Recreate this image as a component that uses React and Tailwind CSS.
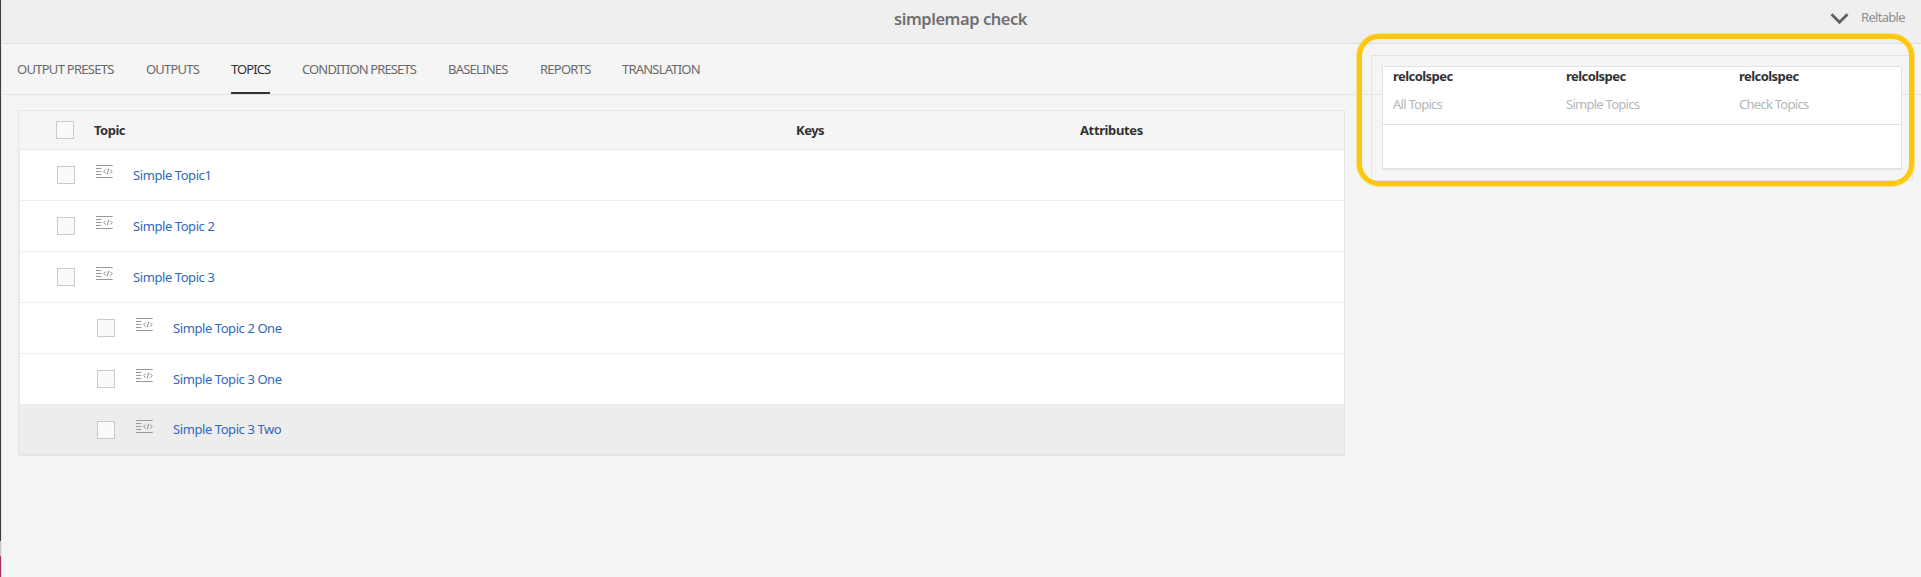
import React from "react";

const tabs = [
  { label: "OUTPUT PRESETS", style: "w-[97px] tracking-[-0.72px]" },
  { label: "OUTPUTS", style: "w-[53px] tracking-[-0.8px]" },
  { label: "TOPICS", style: "w-[39px] tracking-[-0.9px]", active: true },
  { label: "CONDITION PRESETS", style: "w-[114px] tracking-[-0.87px]" },
  { label: "BASELINES", style: "w-[60px] tracking-[-0.78px]" },
  { label: "REPORTS", style: "w-[50px] tracking-[-0.75px]" },
  { label: "TRANSLATION", style: "w-[78px] tracking-[-0.8px]" },
];

const topics = [
  { id: 1, title: "Simple Topic1" },
  { id: 2, title: "Simple Topic 2" },
  { id: 3, title: "Simple Topic 3" },
  { id: 4, title: "Simple Topic 2 One", child: true },
  { id: 5, title: "Simple Topic 3 One", child: true },
  { id: 6, title: "Simple Topic 3 Two", child: true, selected: true },
];

const relColumns = ["All Topics", "Simple Topics", "Check Topics"];

function Checkbox() {
  return (
    <span className="block w-[18px] h-[18px] shrink-0 border border-[#cacaca] bg-[#fafafa]"></span>
  );
}

function TopicIcon() {
  return (
    <svg className="block shrink-0" width="17" height="13" viewBox="0 0 17 13" fill="none">
      <path d="M0 0.5H16.7M0 12.5H16.7" stroke="#999999" strokeWidth="1" />
      <path d="M0 3.5H5.3M0 6.5H5.3M0 9.5H5.3" stroke="#999999" strokeWidth="1.1" />
      <path d="M9.6 4.6L7.7 6.6L9.6 8.6M14.2 4.6L16.1 6.6L14.2 8.6M12.7 3.8L11.2 9.4" stroke="#8c8c8c" strokeWidth="1" />
    </svg>
  );
}

function Header() {
  return (
    <header className="flex h-11 border-b border-[#dedede] bg-[#efefef] text-[#707070]">
      <div className="w-[892px]"></div>
      <h1 className="w-[936px] text-[16.5px] leading-[38px] font-semibold tracking-[-0.45px]">
        simplemap check
      </h1>
      <svg className="mt-3 shrink-0" width="19" height="13" viewBox="0 0 19 13" fill="none">
        <path d="M1.5 2.2L9.5 10.2L17.5 2.2" stroke="#606060" strokeWidth="2.8" />
      </svg>
      <span className="ml-3 text-[13px] leading-[35px] text-[#909090] tracking-[-0.7px]">
        Reltable
      </span>
    </header>
  );
}

function Tabs() {
  return (
    <nav className="flex gap-8 h-[51px] pl-[15px] border-b border-[#e4e4e4] text-[13px] text-[#6a6a6a]">
      {tabs.map((tab) => (
        <div key={tab.label} className={tab.active ? "h-[50px] border-b-2 border-[#323232] text-[#323232]" : "h-[50px]"}>
          <div className={`whitespace-nowrap leading-[51px] ${tab.style}`}>{tab.label}</div>
        </div>
      ))}
    </nav>
  );
}

function TopicTable() {
  return (
    <section className="ml-4 mt-[15px] w-[1327px] border border-[#e6e6e6] text-[13px]">
      <div className="flex items-center h-[39px] border-b border-[#ebebeb] pl-[37px] font-bold text-[#323232]">
        <Checkbox />
        <span className="ml-5 mt-[2px] w-[702px] tracking-[-0.5px]">Topic</span>
        <span className="mt-[2px] w-[284px] tracking-[-0.5px]">Keys</span>
        <span className="mt-[2px] tracking-[-0.38px]">Attributes</span>
      </div>

      <div className="border-l border-[#ebebeb]">
        {topics.map((topic) => (
          <div
            key={topic.id}
            className={`flex items-center border-b ${
              topic.selected ? "h-[50px] bg-[#ededed] border-[#e6e6e6]" : "h-[51px] bg-white border-[#ededed]"
            } ${topic.child ? "pl-[77px]" : "pl-[37px]"}`}
          >
            <Checkbox />
            <div className="ml-[21px] mb-[7px]">
              <TopicIcon />
            </div>
            <a className={`ml-5 text-[#2f68bd] tracking-[-0.42px] ${topic.selected ? "" : "mt-[2px]"}`}>
              {topic.title}
            </a>
          </div>
        ))}
      </div>
    </section>
  );
}

function ReltablePopover() {
  return (
    <>
      <div className="absolute left-[1371px] top-[55px] w-[542px] h-[126px] border border-[#e4e4e4] p-[10px]">
        <div className="w-[520px] h-[104px] border border-[#e2e2e2] border-b-2 bg-white text-[13px]">
          <div className="grid grid-cols-[173px_173px_1fr] h-[58px] pl-[10px] border-b border-[#e0e0e0]">
            {relColumns.map((name) => (
              <div key={name}>
                <p className="leading-[18px] font-bold text-[#323232] tracking-[-0.55px]">relcolspec</p>
                <p className="mt-[10px] leading-[18px] text-[#b6b6b6] tracking-[-0.73px]">{name}</p>
              </div>
            ))}
          </div>
        </div>
      </div>

      {/* highlight ring */}
      <div className="absolute left-[1356px] top-[33px] w-[559px] h-[154px] rounded-[23px] border border-[#fbe08a]">
        <div className="h-full rounded-[22px] border-[5px] border-[#fdc70e]"></div>
      </div>
    </>
  );
}

function App() {
  return (
    <div className="relative flex w-[1921px] h-[577px] overflow-hidden bg-[#f5f5f5] font-['Noto_Sans',sans-serif]">
      {/* edge of the page behind */}
      <div className="w-px shrink-0 bg-[#3d4048]">
        <div className="mt-[541px] h-[15px] bg-[#c9c9c9]"></div>
        <div className="h-[21px] bg-[#b02c58]"></div>
      </div>

      <main className="w-[1920px] border-l border-[#e4e4e4]">
        <Header />
        <Tabs />
        <TopicTable />
      </main>

      <ReltablePopover />
    </div>
  );
}

export default App;
